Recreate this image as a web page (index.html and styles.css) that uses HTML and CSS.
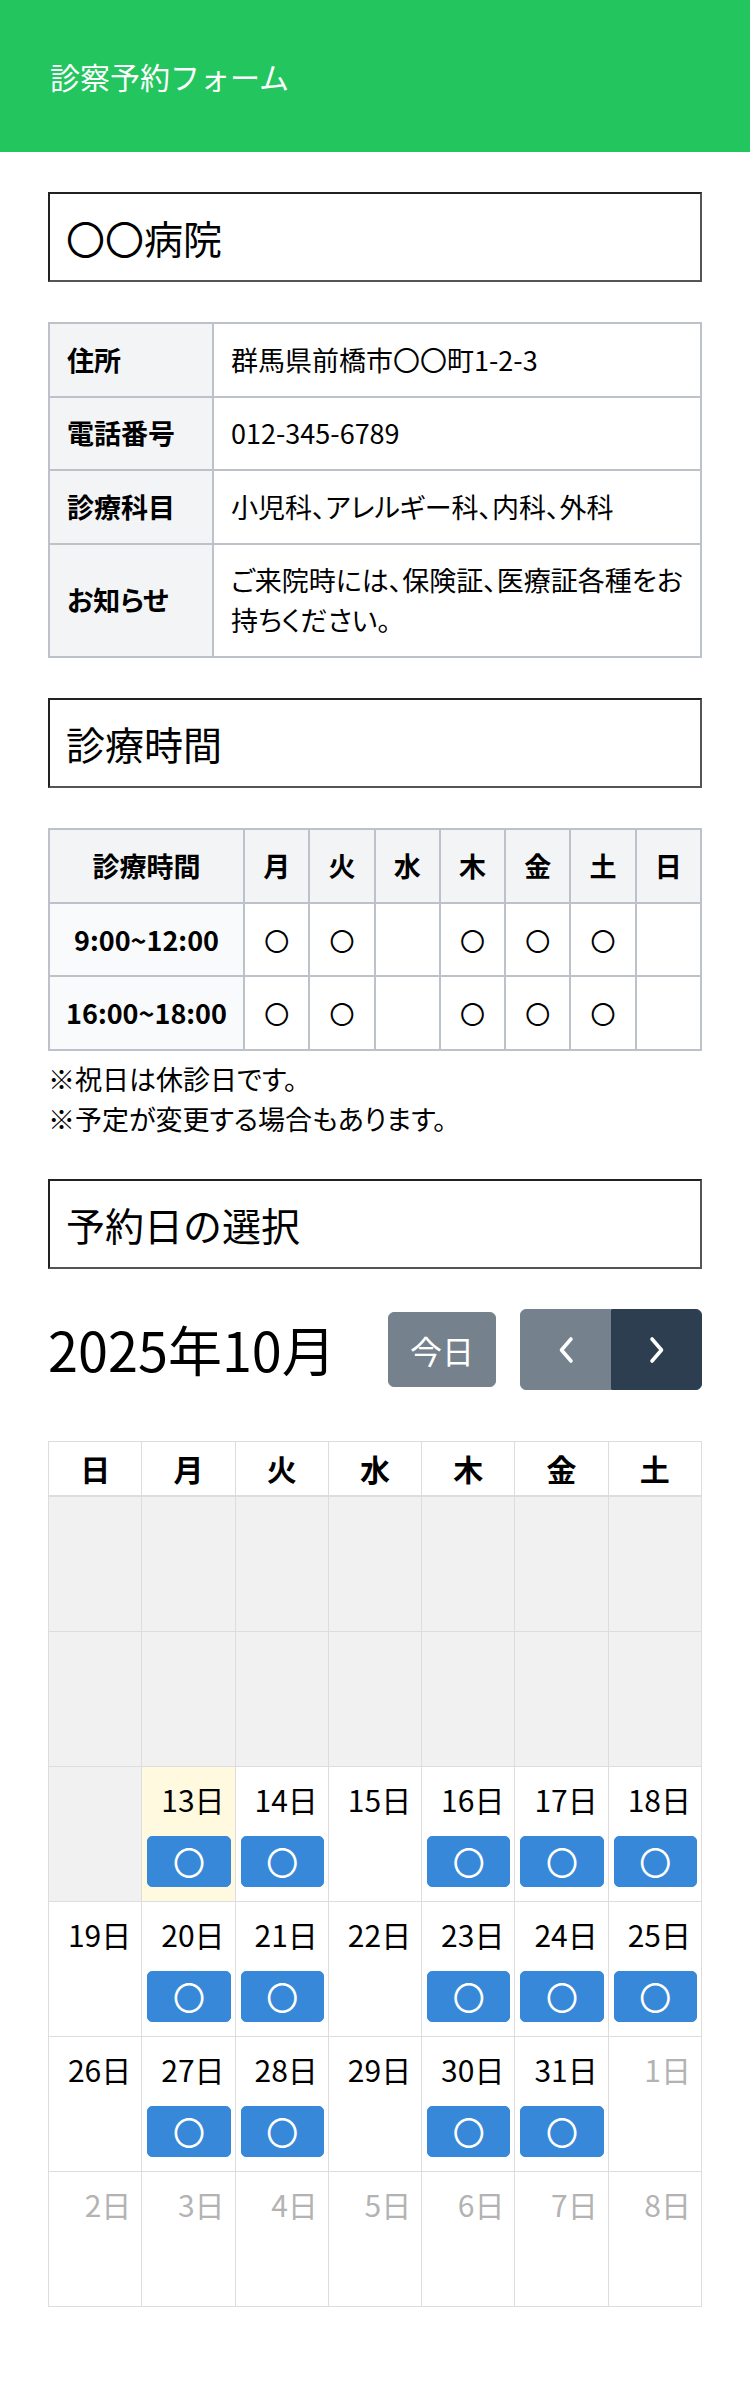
FILE: index.html
```html
<!DOCTYPE html>
<html lang="ja">
<head>
<meta charset="utf-8">
<title>診察予約フォーム</title>
<link rel="stylesheet" href="styles.css">
</head>
<body>
<header class="app-header">
  <h1 class="app-title">診察予約フォーム</h1>
</header>
<main class="content">
  <h2 class="section-box">〇〇病院</h2>

  <table class="info-table">
    <colgroup><col class="info-col-head"><col></colgroup>
    <tr><th>住所</th><td>群馬県前橋市〇〇町1-2-3</td></tr>
    <tr><th>電話番号</th><td>012-345-6789</td></tr>
    <tr><th>診療科目</th><td>小児科、アレルギー科、内科、外科</td></tr>
    <tr><th>お知らせ</th><td>ご来院時には、保険証、医療証各種をお持ちください。</td></tr>
  </table>

  <h2 class="section-box">診療時間</h2>

  <table class="hours-table">
    <colgroup><col class="hours-col-head"><col><col><col><col><col><col><col></colgroup>
    <tr class="hours-head"><th>診療時間</th><th>月</th><th>火</th><th>水</th><th>木</th><th>金</th><th>土</th><th>日</th></tr>
    <tr><th class="hours-time">9:00~12:00</th><td>〇</td><td>〇</td><td></td><td>〇</td><td>〇</td><td>〇</td><td></td></tr>
    <tr><th class="hours-time">16:00~18:00</th><td>〇</td><td>〇</td><td></td><td>〇</td><td>〇</td><td>〇</td><td></td></tr>
  </table>

  <div class="notes">
    <p>※祝日は休診日です。</p>
    <p>※予定が変更する場合もあります。</p>
  </div>

  <h2 class="section-box">予約日の選択</h2>

  <div class="calendar">
    <div class="cal-toolbar">
      <h2 class="cal-title">2025年10月</h2>
      <div class="cal-actions">
        <button class="btn btn-disabled btn-today" type="button">今日</button>
        <div class="btn-group">
          <button class="btn btn-disabled btn-icon btn-first" type="button" aria-label="prev">
            <svg width="18" height="28" viewBox="0 0 18 28"><path d="M14 3 L4.5 14 L14 25" fill="none" stroke="#fff" stroke-width="3.6" stroke-linecap="round" stroke-linejoin="round"/></svg>
          </button>
          <button class="btn btn-icon btn-last" type="button" aria-label="next">
            <svg width="18" height="28" viewBox="0 0 18 28"><path d="M4 3 L13.5 14 L4 25" fill="none" stroke="#fff" stroke-width="3.6" stroke-linecap="round" stroke-linejoin="round"/></svg>
          </button>
        </div>
      </div>
    </div>

    <div class="cal-grid">
      <div class="cal-head">日</div><div class="cal-head">月</div><div class="cal-head">火</div><div class="cal-head">水</div><div class="cal-head">木</div><div class="cal-head">金</div><div class="cal-head">土</div>

      <div class="day day-past"></div><div class="day day-past"></div><div class="day day-past"></div><div class="day day-past"></div><div class="day day-past"></div><div class="day day-past"></div><div class="day day-past"></div>

      <div class="day day-past"></div><div class="day day-past"></div><div class="day day-past"></div><div class="day day-past"></div><div class="day day-past"></div><div class="day day-past"></div><div class="day day-past"></div>

      <div class="day day-past"></div>
      <div class="day day-today"><span class="day-num">13日</span><span class="event">〇</span></div>
      <div class="day"><span class="day-num">14日</span><span class="event">〇</span></div>
      <div class="day"><span class="day-num">15日</span></div>
      <div class="day"><span class="day-num">16日</span><span class="event">〇</span></div>
      <div class="day"><span class="day-num">17日</span><span class="event">〇</span></div>
      <div class="day"><span class="day-num">18日</span><span class="event">〇</span></div>

      <div class="day"><span class="day-num">19日</span></div>
      <div class="day"><span class="day-num">20日</span><span class="event">〇</span></div>
      <div class="day"><span class="day-num">21日</span><span class="event">〇</span></div>
      <div class="day"><span class="day-num">22日</span></div>
      <div class="day"><span class="day-num">23日</span><span class="event">〇</span></div>
      <div class="day"><span class="day-num">24日</span><span class="event">〇</span></div>
      <div class="day"><span class="day-num">25日</span><span class="event">〇</span></div>

      <div class="day"><span class="day-num">26日</span></div>
      <div class="day"><span class="day-num">27日</span><span class="event">〇</span></div>
      <div class="day"><span class="day-num">28日</span><span class="event">〇</span></div>
      <div class="day"><span class="day-num">29日</span></div>
      <div class="day"><span class="day-num">30日</span><span class="event">〇</span></div>
      <div class="day"><span class="day-num">31日</span><span class="event">〇</span></div>
      <div class="day day-other"><span class="day-num">1日</span></div>

      <div class="day day-other"><span class="day-num">2日</span></div>
      <div class="day day-other"><span class="day-num">3日</span></div>
      <div class="day day-other"><span class="day-num">4日</span></div>
      <div class="day day-other"><span class="day-num">5日</span></div>
      <div class="day day-other"><span class="day-num">6日</span></div>
      <div class="day day-other"><span class="day-num">7日</span></div>
      <div class="day day-other"><span class="day-num">8日</span></div>
    </div>
  </div>
</main>
</body>
</html>
```

FILE: styles.css
```css
* { box-sizing: border-box; }

html, body {
  margin: 0;
  padding: 0;
  background: #fff;
  color: #000;
  font-family: "Noto Sans CJK JP", "Noto Sans", sans-serif;
}

.app-header {
  height: 152px;
  background: #22c55e;
  display: flex;
  align-items: center;
  padding: 0 50px;
}

.app-title {
  margin: 0;
  color: #fff;
  font-size: 30px;
  font-weight: 400;
  line-height: 1.2;
}

.content {
  padding: 40px 48px 80px;
}

.section-box {
  margin: 0 0 40px;
  border: 2px solid;
  border-color: #222 #555 #555 #222;
  padding: 14px 16px;
  font-size: 39px;
  font-weight: 400;
  line-height: 58px;
}

/* info table */
.info-table {
  width: 100%;
  table-layout: fixed;
  border-collapse: collapse;
  margin-bottom: 40px;
  font-size: 27px;
  line-height: 40px;
  font-feature-settings: "palt";
}

.info-col-head { width: 164px; }

.info-table th,
.info-table td {
  border: 2px solid #bcc1ca;
  padding: 15.5px 17px 16px;
  text-align: left;
  vertical-align: middle;
}

.info-table th {
  background: #f3f4f6;
  font-weight: 700;
}

/* hours table */
.hours-table {
  width: 100%;
  table-layout: fixed;
  border-collapse: collapse;
  font-size: 25px;
  line-height: 40px;
}

.hours-col-head { width: 195px; }

.hours-table th,
.hours-table td {
  border: 2px solid #bcc1ca;
  padding: 16px 0 15.5px;
  text-align: center;
  vertical-align: middle;
}

.hours-head th {
  background: #f3f4f6;
  font-size: 27px;
  font-weight: 700;
}

.hours-table .hours-time {
  background: #f9fafb;
  font-size: 27px;
  font-weight: 700;
}

.notes {
  margin: 8px 0 40px;
  font-size: 27px;
  line-height: 40px;
  font-feature-settings: "palt";
}

.notes p { margin: 0; }

/* calendar */
.cal-toolbar {
  margin: 2px 0 50px;
  height: 82px;
  display: flex;
  align-items: center;
  justify-content: space-between;
}

.cal-title {
  margin: 0;
  font-size: 54px;
  font-weight: 400;
  line-height: 1.2;
}

.cal-actions {
  display: flex;
  align-items: center;
  gap: 24px;
}

.btn {
  border: 1px solid #2c3e50;
  background: #2c3e50;
  color: #fff;
  font-family: inherit;
  font-size: 32px;
  line-height: 48px;
  border-radius: 6px;
  margin: 0;
  display: flex;
  align-items: center;
  justify-content: center;
}

.btn-disabled { opacity: 0.65; }

.btn-today {
  width: 108px;
  height: 75px;
  padding: 0;
}

.btn-group { display: flex; }

.btn-icon {
  width: 91px;
  height: 81px;
  padding: 0;
}

.btn-first { border-radius: 6px 0 0 6px; }
.btn-last { border-radius: 0 6px 6px 0; }

.cal-grid {
  display: grid;
  grid-template-columns: repeat(7, 1fr);
  grid-template-rows: 55px repeat(6, 135px);
  border-top: 1px solid #ddd;
  border-left: 1px solid #ddd;
}

.cal-head {
  border-right: 1px solid #ddd;
  border-bottom: 2px solid #ddd;
  font-size: 30px;
  font-weight: 700;
  text-align: center;
  line-height: 52px;
}

.day {
  border-right: 1px solid #ddd;
  border-bottom: 1px solid #ddd;
  display: flex;
  flex-direction: column;
  align-items: stretch;
  background: #fff;
}

.day-past { background: #f1f1f1; }
.day-today { background: #fffadf; }

.day-num {
  align-self: flex-end;
  padding: 10px 10px 0 0;
  font-size: 30px;
  line-height: 45px;
}

.day-other .day-num { color: #b3b3b3; }

.event {
  margin: 14px 4px 0 5px;
  height: 51px;
  background: #3788d8;
  border: 1px solid #3788d8;
  border-radius: 5px;
  color: #fff;
  font-size: 32px;
  line-height: 49px;
  text-align: center;
}
```
